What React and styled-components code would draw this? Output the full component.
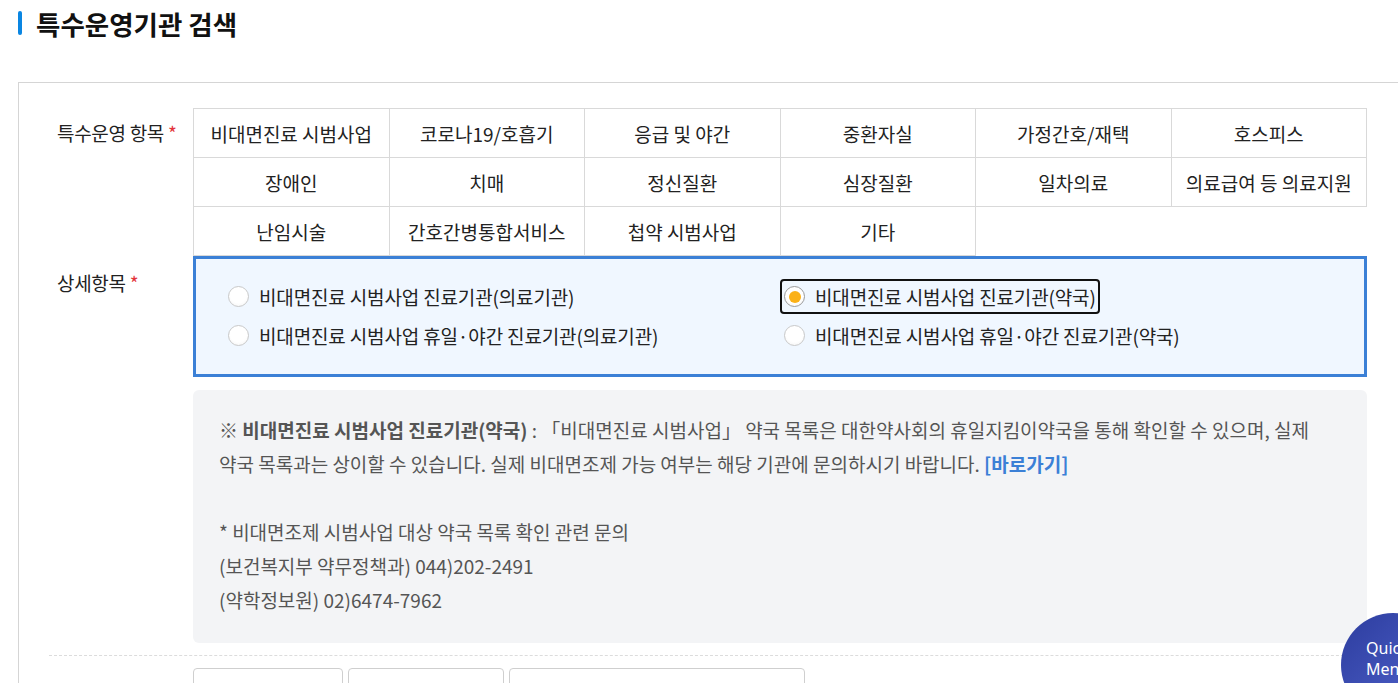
import React from "react";
import styled, { createGlobalStyle } from "styled-components";

const Global = createGlobalStyle`
  html, body { margin: 0; padding: 0; background: #fff; overflow: hidden; }
  body { font-family: "Noto Sans CJK KR", "Noto Sans", sans-serif; color: #222; }
  * { box-sizing: border-box; }
`;

const Page = styled.div`
  width: 1440px;
  padding-left: 18px;
`;

const Header = styled.h2`
  display: flex;
  align-items: center;
  gap: 14px;
  margin: 4px 0 40px;
  height: 38px;
  font-size: 26.5px;
  font-weight: 700;
  color: #111;
`;

const Bar = styled.span`
  width: 4px;
  height: 24px;
  border-radius: 2px;
  background: #0a86e2;
`;

const Panel = styled.div`
  border-top: 1px solid #d5d5d5;
  border-left: 1px solid #d5d5d5;
  padding: 25px 0 0 30px;
  height: 700px;
`;

const Row = styled.div`
  display: flex;
  width: 1318px;
`;

const Label = styled.div`
  width: 144px;
  flex: none;
  padding-left: 8px;
  padding-top: ${(p) => p.$top}px;
  font-size: 19px;
  line-height: 26px;
  letter-spacing: -0.3px;
  color: #222;
`;

const Star = styled.span`
  color: #e3343a;
  margin-left: 4px;
`;

const Field = styled.div`
  flex: 1;
  min-width: 0;
`;

const Grid = styled.div`
  display: grid;
  grid-template-columns: repeat(6, 1fr);
  border-top: 1px solid #d9d9d9;
  border-left: 1px solid #d9d9d9;
`;

const Cell = styled.div`
  height: 49px;
  display: flex;
  align-items: center;
  justify-content: center;
  border-right: 1px solid #d9d9d9;
  border-bottom: 1px solid #d9d9d9;
  font-size: 19px;
  color: #222;
  white-space: nowrap;
`;

const DetailBox = styled.div`
  border: 3px solid #3b80d6;
  background: #f0f7ff;
  padding: 20px 28px 21px;
  display: grid;
  grid-template-columns: 556px 1fr;
  row-gap: 4px;
`;

const RadioItem = styled.label`
  justify-self: start;
  display: flex;
  align-items: center;
  gap: 10px;
  height: 35px;
  padding: 0 2px;
  border: 2px solid ${(p) => (p.$focus ? "#111" : "transparent")};
  border-radius: 4px;
  font-size: 19px;
  letter-spacing: -0.15px;
  color: #222;
  white-space: nowrap;
`;

const Circle = styled.span`
  width: 21px;
  height: 21px;
  border-radius: 50%;
  flex: none;
  background: radial-gradient(circle at 50% 40%, #ffffff 55%, #f1f1f1 100%);
  border: 1px solid ${(p) => (p.$on ? "#9a9a9a" : "#c9c9c9")};
  display: flex;
  align-items: center;
  justify-content: center;
  &::after {
    content: "";
    width: 12px;
    height: 12px;
    border-radius: 50%;
    background: ${(p) => (p.$on ? "#fbb117" : "transparent")};
  }
`;

const InfoBox = styled.div`
  margin-top: 13px;
  background: #f3f4f6;
  border-radius: 6px;
  padding: 23px 26px 26px;
  font-size: 19px;
  line-height: 34px;
  color: #555;
  white-space: nowrap;
`;

const Strong = styled.b`
  font-weight: 700;
`;

const Link = styled.a`
  color: #3b80d6;
  font-weight: 700;
  text-decoration: none;
`;

const Dashed = styled.div`
  margin-top: 12px;
  border-top: 1px dashed #dcdcdc;
  width: 1360px;
`;

const InputRow = styled.div`
  display: flex;
  gap: 5px;
  margin-top: 12px;
  padding-left: 144px;
`;

const Input = styled.div`
  width: ${(p) => p.$w}px;
  height: 40px;
  border: 1px solid #cfcfcf;
  border-radius: 4px;
`;

const Quick = styled.div`
  position: fixed;
  left: 1341px;
  top: 613px;
  width: 104px;
  height: 104px;
  border-radius: 50%;
  background: linear-gradient(135deg, #2c3c9e 0%, #5366cf 100%);
  color: #fff;
  font-family: "Noto Sans", sans-serif;
  font-size: 16px;
  line-height: 21px;
  padding: 25px 0 0 25px;
`;

const items = [
  "비대면진료 시범사업", "코로나19/호흡기", "응급 및 야간", "중환자실", "가정간호/재택", "호스피스",
  "장애인", "치매", "정신질환", "심장질환", "일차의료", "의료급여 등 의료지원",
  "난임시술", "간호간병통합서비스", "첩약 시범사업", "기타",
];

const radios = [
  { t: "비대면진료 시범사업 진료기관(의료기관)" },
  { t: "비대면진료 시범사업 진료기관(약국)", on: true },
  { t: "비대면진료 시범사업 휴일·야간 진료기관(의료기관)" },
  { t: "비대면진료 시범사업 휴일·야간 진료기관(약국)" },
];

export default function App() {
  return (
    <>
      <Global />
      <Page>
        <Header>
          <Bar />
          특수운영기관 검색
        </Header>
        <Panel>
          <Row>
            <Label $top={12}>
              특수운영 항목<Star>*</Star>
            </Label>
            <Field>
              <Grid>
                {items.map((t) => (
                  <Cell key={t}>{t}</Cell>
                ))}
              </Grid>
            </Field>
          </Row>
          <Row>
            <Label $top={14}>
              상세항목<Star>*</Star>
            </Label>
            <Field>
              <DetailBox>
                {radios.map((r) => (
                  <RadioItem key={r.t} $focus={r.on}>
                    <Circle $on={r.on} />
                    {r.t}
                  </RadioItem>
                ))}
              </DetailBox>
              <InfoBox>
                <Strong>※ 비대면진료 시범사업 진료기관(약국)</Strong> : 「비대면진료 시범사업」 약국 목록은 대한약사회의 휴일지킴이약국을 통해 확인할 수 있으며, 실제
                <br />
                약국 목록과는 상이할 수 있습니다. 실제 비대면조제 가능 여부는 해당 기관에 문의하시기 바랍니다. <Link href="#">[바로가기]</Link>
                <br />
                <br />
                * 비대면조제 시범사업 대상 약국 목록 확인 관련 문의
                <br />
                (보건복지부 약무정책과) 044)202-2491
                <br />
                (약학정보원) 02)6474-7962
              </InfoBox>
            </Field>
          </Row>
          <Dashed />
          <InputRow>
            <Input $w={150} />
            <Input $w={156} />
            <Input $w={296} />
          </InputRow>
        </Panel>
        <Quick>
          Quick
          <br />
          Menu
        </Quick>
      </Page>
    </>
  );
}
